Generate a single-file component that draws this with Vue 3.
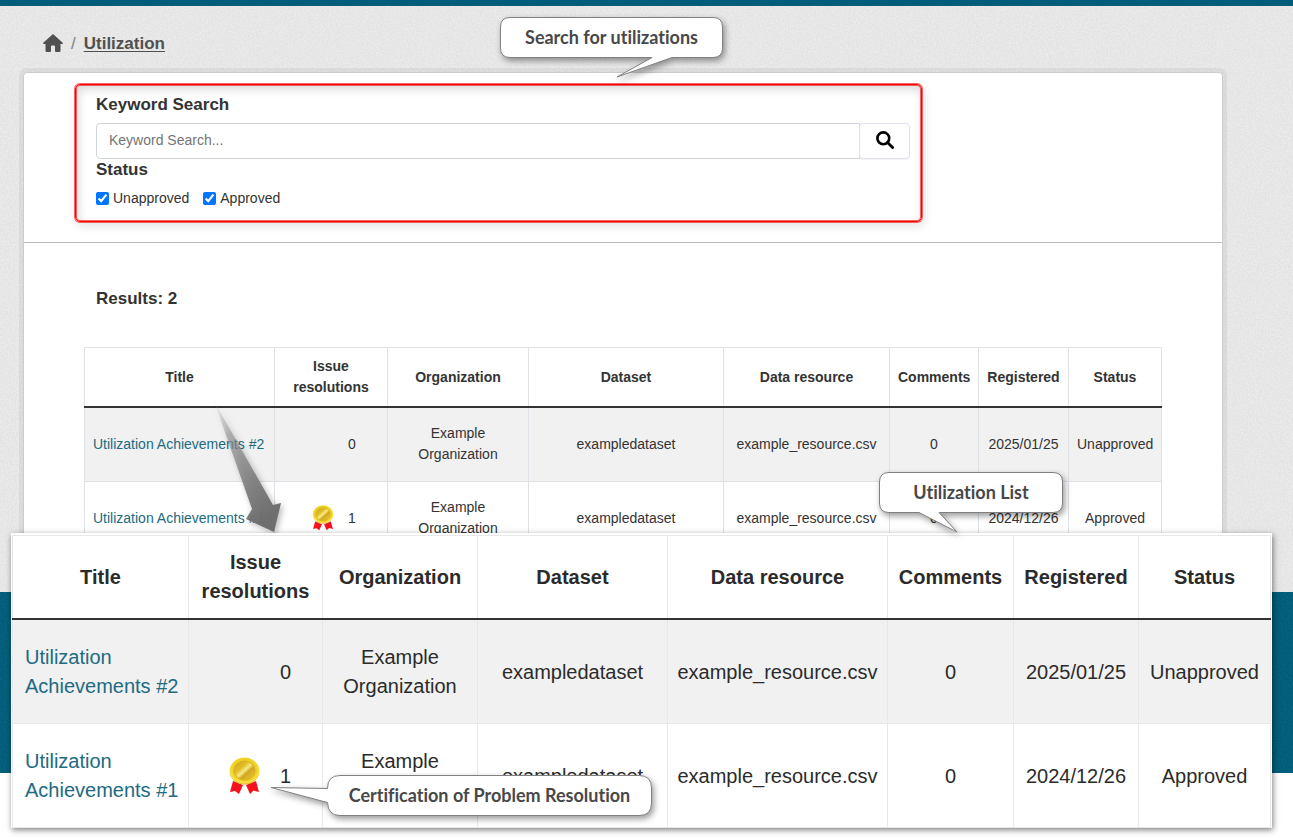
<script setup>
import { ref } from 'vue'

const keyword = ref('')
const unapproved = ref(true)
const approved = ref(true)

const columns = ['Title', 'Issue resolutions', 'Organization', 'Dataset', 'Data resource', 'Comments', 'Registered', 'Status']

const rows = [
  { title: 'Utilization Achievements #2', issues: 0, organization: 'Example Organization', dataset: 'exampledataset', resource: 'example_resource.csv', comments: 0, registered: '2025/01/25', status: 'Unapproved' },
  { title: 'Utilization Achievements #1', issues: 1, organization: 'Example Organization', dataset: 'exampledataset', resource: 'example_resource.csv', comments: 0, registered: '2024/12/26', status: 'Approved' }
]

const tables = {
  list: [190, 113, 141, 195, 166, 89, 90, 93],
  large: [176, 134, 155, 190, 220, 126, 125, 132]
}
</script>

<template>
  <div class="page">
    <svg class="defs" width="0" height="0" aria-hidden="true">
      <defs>
        <filter id="grain" x="0" y="0" width="100%" height="100%">
          <feTurbulence type="fractalNoise" baseFrequency="0.6" numOctaves="2" seed="4" />
          <feColorMatrix type="matrix" values="0 0 0 0 1  0 0 0 0 1  0 0 0 0 1  1.6 0 0 0 -0.6" />
        </filter>
        <radialGradient id="gold" cx="0.5" cy="0.45" r="0.55">
          <stop offset="0" stop-color="#f3d94a" />
          <stop offset="0.7" stop-color="#f0cf1c" />
          <stop offset="0.9" stop-color="#f7e04a" />
          <stop offset="1" stop-color="#d9a812" />
        </radialGradient>
        <linearGradient id="coin" x1="0" y1="0" x2="1" y2="1">
          <stop offset="0" stop-color="#d0a416" />
          <stop offset="0.35" stop-color="#e2bd28" />
          <stop offset="0.5" stop-color="#f8ea84" />
          <stop offset="0.62" stop-color="#d2a61e" />
          <stop offset="1" stop-color="#eed23c" />
        </linearGradient>
        <symbol id="medal" viewBox="0 0 31 38">
          <path d="M4 24 L14 28 L10 37 L6 34 L1 35 Z" fill="#f5121f" />
          <path d="M27 24 L17 28 L21 37 L24.500 33.500 L30 35 Z" fill="#f5121f" />
          <ellipse cx="15.500" cy="14" rx="15" ry="13.500" fill="url(#gold)" />
          <ellipse cx="15.500" cy="13.500" rx="10.500" ry="9.500" fill="url(#coin)" stroke="#d6b02a" stroke-width="1" />
        </symbol>
      </defs>
    </svg>

    <header class="topbar"></header>

    <main class="main">
      <svg class="grain" aria-hidden="true"><rect width="100%" height="100%" filter="url(#grain)" /></svg>
      <nav class="breadcrumb" aria-label="Breadcrumb">
        <a href="#" aria-label="Home">
          <svg class="home" viewBox="0 0 20 18" aria-hidden="true">
            <path d="M10 0 L20 9 Q20 10 19 10 H17.500 V17 Q17.500 18 16.500 18 H13 Q12 18 12 17 V12.500 Q12 11.500 11 11.500 H9 Q8 11.500 8 12.500 V17 Q8 18 7 18 H3.500 Q2.500 18 2.500 17 V10 H1 Q0 10 0 9 Z" fill="#505050" />
          </svg>
        </a>
        <span class="slash">/</span>
        <a class="current" href="#">Utilization</a>
      </nav>

      <div class="card">
        <form class="search" @submit.prevent>
          <label class="heading" for="keyword">Keyword Search</label>
          <div class="field">
            <input id="keyword" v-model="keyword" type="text" placeholder="Keyword Search..." />
            <button type="submit" aria-label="Search">
              <svg viewBox="0 0 18 18" width="18" height="18" aria-hidden="true">
                <circle cx="7.300" cy="7.300" r="5.900" fill="none" stroke="#000" stroke-width="2.600" />
                <path d="M11.500 11.500 L16.600 16.600" stroke="#000" stroke-width="2.800" stroke-linecap="round" />
              </svg>
            </button>
          </div>
          <fieldset class="status">
            <legend class="heading">Status</legend>
            <div class="checks">
              <label><input v-model="unapproved" type="checkbox" />Unapproved</label>
              <label><input v-model="approved" type="checkbox" />Approved</label>
            </div>
          </fieldset>
          <div class="highlight"></div>
        </form>

        <section class="results">
          <h2 class="heading count">Results: 2</h2>
          <table class="grid">
            <colgroup><col v-for="(w, i) in tables.list" :key="i" :style="{ width: w + 'px' }" /></colgroup>
            <thead>
              <tr><th v-for="c in columns" :key="c" scope="col">{{ c }}</th></tr>
            </thead>
            <tbody>
              <tr v-for="r in rows" :key="r.title">
                <td class="title"><a href="#">{{ r.title }}</a></td>
                <td>
                  <span class="issues">
                    <span class="slot"><svg v-if="r.issues" class="medal" role="img" aria-label="Certified"><use href="#medal" /></svg></span>
                    <span>{{ r.issues }}</span>
                  </span>
                </td>
                <td>{{ r.organization }}</td>
                <td>{{ r.dataset }}</td>
                <td>{{ r.resource }}</td>
                <td>{{ r.comments }}</td>
                <td>{{ r.registered }}</td>
                <td>{{ r.status }}</td>
              </tr>
            </tbody>
          </table>
        </section>
      </div>
    </main>

    <footer class="footer">
      <svg class="grain" aria-hidden="true"><rect width="100%" height="100%" filter="url(#grain)" /></svg>
    </footer>

    <svg class="arrow" viewBox="0 0 80 140" width="80" height="140" aria-hidden="true">
      <defs>
        <linearGradient id="fade" x1="0.1" y1="0" x2="0.6" y2="1">
          <stop offset="0" stop-color="#a0a0a0" stop-opacity="0.1" />
          <stop offset="0.25" stop-color="#909090" stop-opacity="0.6" />
          <stop offset="0.7" stop-color="#7c7c7c" stop-opacity="0.92" />
          <stop offset="1" stop-color="#6c6c6c" stop-opacity="0.97" />
        </linearGradient>
      </defs>
      <path d="M14 11 L73 115 L81 113 L74 142 L46 129 L52 119 Z" fill="url(#fade)" />
    </svg>

    <div class="overlay">
      <table class="grid large">
        <colgroup><col v-for="(w, i) in tables.large" :key="i" :style="{ width: w + 'px' }" /></colgroup>
        <thead>
          <tr><th v-for="c in columns" :key="c" scope="col">{{ c }}</th></tr>
        </thead>
        <tbody>
          <tr v-for="r in rows" :key="r.title">
            <td class="title"><a href="#">{{ r.title }}</a></td>
            <td>
              <span class="issues">
                <span class="slot"><svg v-if="r.issues" class="medal" role="img" aria-label="Certified"><use href="#medal" /></svg></span>
                <span>{{ r.issues }}</span>
              </span>
            </td>
            <td>{{ r.organization }}</td>
            <td>{{ r.dataset }}</td>
            <td>{{ r.resource }}</td>
            <td>{{ r.comments }}</td>
            <td>{{ r.registered }}</td>
            <td>{{ r.status }}</td>
          </tr>
        </tbody>
      </table>
    </div>

    <div class="callout find">
      <svg viewBox="0 0 223 61" width="223" height="61" aria-hidden="true">
        <path d="M10 .5 H213 Q222.500 .5 222.500 10 V31 Q222.500 40.500 213 40.500 H172 L117 60 L152 40.500 H10 Q.5 40.500 .5 31 V10 Q.5 .5 10 .5 Z" />
      </svg>
      <span>Search for utilizations</span>
    </div>
    <div class="callout list">
      <svg viewBox="0 0 184 61" width="184" height="61" aria-hidden="true">
        <path d="M10 .5 H174 Q183.500 .5 183.500 10 V31 Q183.500 40.500 174 40.500 H60 L78 60 L40 40.500 H10 Q.5 40.500 .5 31 V10 Q.5 .5 10 .5 Z" />
      </svg>
      <span>Utilization List</span>
    </div>
    <div class="callout proof">
      <svg viewBox="-57 0 382 61" width="382" height="61" aria-hidden="true">
        <path d="M13 .5 H312 Q324.500 .5 324.500 13 V28 Q324.500 40.500 312 40.500 H13 Q1 40.500 .5 27.500 L-56 12.500 L.5 13.500 Q.5 .5 13 .5 Z" />
      </svg>
      <span>Certification of Problem Resolution</span>
    </div>
  </div>
</template>

<style>
body {
  margin: 0;
  background: #fff;
}
</style>

<style scoped>
.page {
  position: relative;
  min-height: 100vh;
  font: 14px/21px "Liberation Sans", Arial, sans-serif;
  color: #333;
  overflow: hidden;
}
.defs {
  position: absolute;
}
.topbar {
  height: 6px;
  background: #005d7a;
}
.main {
  position: relative;
  padding: 24px 70px 16px 23px;
  background: #e4e4e4;
}
.grain {
  position: absolute;
  inset: 0;
  width: 100%;
  height: 100%;
  opacity: 0.5;
}
.breadcrumb {
  position: relative;
  display: flex;
  align-items: center;
  gap: 8px;
  height: 26px;
  margin: 0 20px 16px;
  font-size: 17px;
}
.breadcrumb a {
  color: #505050;
}
.home {
  display: block;
  width: 20px;
  height: 18px;
}
.slash {
  color: #808080;
}
.current {
  font-weight: bold;
  text-underline-offset: 2px;
}
.card {
  position: relative;
  border: 1px solid #ccc;
  border-radius: 4px;
  background: #fff;
  box-shadow: 0 0 0 4px rgba(0, 0, 0, 0.05);
}
.search {
  position: relative;
  padding: 21px 312px 33px 72px;
  border-bottom: 1px solid #bbb;
}
.heading {
  display: block;
  margin: 0 0 7px;
  padding: 0;
  font-size: 17px;
  font-weight: bold;
  line-height: 22px;
}
.field {
  display: flex;
  height: 36px;
}
.field input {
  flex: 1;
  min-width: 0;
  padding: 0 12px 2px;
  border: 1px solid #ced4da;
  border-radius: 4px 0 0 4px;
  background: #fff;
  font: inherit;
  color: #333;
}
.field input::placeholder {
  color: #757575;
}
.field button {
  display: flex;
  align-items: center;
  justify-content: center;
  width: 51px;
  padding: 0 0 2px;
  margin-left: -1px;
  border: 1px solid #dfe2ea;
  border-radius: 4px;
  background: #fff;
  box-shadow: 0 1px 1px rgba(0, 0, 0, 0.06);
}
.status {
  min-width: 0;
  margin: 0;
  padding: 0;
  border: 0;
}
.checks {
  display: flex;
  gap: 14px;
}
.checks label {
  display: flex;
  align-items: center;
  gap: 4px;
}
.checks input {
  width: 13px;
  height: 13px;
  margin: 0;
}
.highlight {
  position: absolute;
  inset: 11px 300px 20px 51px;
  border: 1px solid #f00;
  border-radius: 5px;
  box-shadow: 0 0 0 1px rgba(255, 0, 0, 0.6), inset 0 0 0 1px rgba(255, 0, 0, 0.6), 2px 4px 9px 1px rgba(0, 0, 0, 0.1), inset 2px 4px 9px 1px rgba(0, 0, 0, 0.14);
  pointer-events: none;
}
.results {
  padding: 45px 60px 19px;
}
.count {
  margin: 0 12px 37px;
}
.grid {
  width: 100%;
  table-layout: fixed;
  border-collapse: collapse;
  text-align: center;
}
.grid th,
.grid td {
  border: 1px solid #dee2e6;
  vertical-align: middle;
}
.grid th {
  padding: 8px;
}
.grid td {
  padding: 15px 8px 16px;
}
.grid thead th {
  border-bottom: 2px solid #333;
}
.grid tbody tr:first-child {
  background: #f1f1f1;
}
.grid .title {
  text-align: left;
}
.grid a {
  color: #206b82;
  text-decoration: none;
}
.issues {
  display: flex;
  align-items: center;
  justify-content: center;
  gap: 1em;
}
.slot {
  display: flex;
  justify-content: flex-end;
  width: 2em;
}
.medal {
  width: 22px;
  height: 26px;
}
.arrow {
  position: absolute;
  left: 200px;
  top: 390px;
  overflow: visible;
  filter: drop-shadow(2px 2px 3px rgba(0, 0, 0, 0.3));
}
.overlay {
  position: absolute;
  top: 533px;
  left: 11px;
  right: 21px;
  padding: 2px 2px 0 1px;
  background: #fff;
  box-shadow: 1px 2px 6px rgba(0, 0, 0, 0.5);
}
.large {
  font-size: 20px;
  line-height: 29px;
  color: #2b2b2b;
}
.large th {
  padding: 12px 8px;
}
.large td {
  padding: 23px 8px 22px;
}
.large .title {
  padding-left: 12px;
}
.large th,
.large td {
  border-color: #e6e8ea;
}
.large .medal {
  width: 31px;
  height: 38px;
}
.footer {
  position: relative;
  height: 181px;
  background: #005d7a;
}
.footer .grain {
  opacity: 0.06;
}
.callout {
  position: absolute;
  display: flex;
  align-items: center;
  justify-content: center;
  height: 40px;
  font: bold 18px/24px Lato, sans-serif;
  font-variant-ligatures: none;
  color: #484848;
}
.callout svg {
  position: absolute;
  top: 0;
  right: 0;
  overflow: visible;
  filter: drop-shadow(2px 3px 3px rgba(0, 0, 0, 0.4));
}
.callout path {
  fill: #fff;
  stroke: #808080;
}
.callout span {
  position: relative;
  white-space: nowrap;
}
.find {
  left: 500px;
  top: 17px;
  width: 223px;
}
.list {
  left: 879px;
  top: 472px;
  width: 184px;
}
.proof {
  left: 327px;
  top: 775px;
  width: 325px;
}
</style>
